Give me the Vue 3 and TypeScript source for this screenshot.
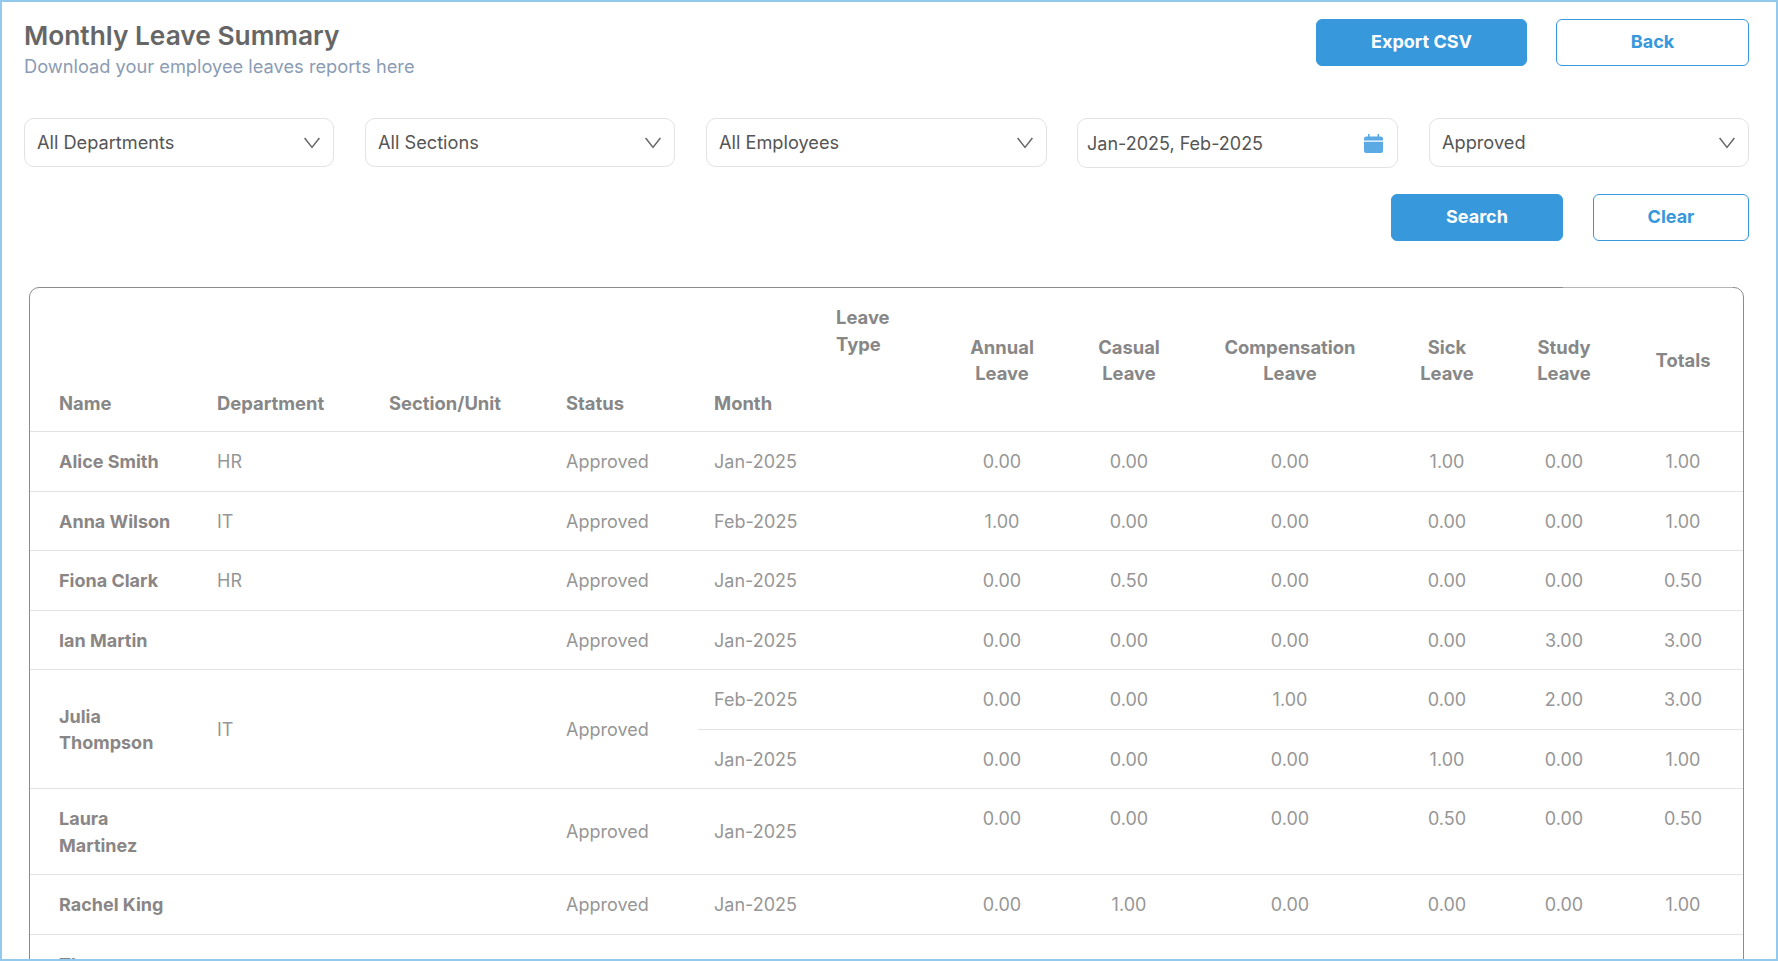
<script setup lang="ts">
interface Group {
  name: string
  dept: string
  status: string
  lines: { month: string; vals: string[] }[]
  top?: boolean
}

const head = ['Annual Leave', 'Casual Leave', 'Compensation Leave', 'Sick Leave', 'Study Leave', 'Totals']

const groups: Group[] = [
  { name: 'Alice Smith', dept: 'HR', status: 'Approved', lines: [{ month: 'Jan-2025', vals: ['0.00', '0.00', '0.00', '1.00', '0.00', '1.00'] }] },
  { name: 'Anna Wilson', dept: 'IT', status: 'Approved', lines: [{ month: 'Feb-2025', vals: ['1.00', '0.00', '0.00', '0.00', '0.00', '1.00'] }] },
  { name: 'Fiona Clark', dept: 'HR', status: 'Approved', lines: [{ month: 'Jan-2025', vals: ['0.00', '0.50', '0.00', '0.00', '0.00', '0.50'] }] },
  { name: 'Ian Martin', dept: '', status: 'Approved', lines: [{ month: 'Jan-2025', vals: ['0.00', '0.00', '0.00', '0.00', '3.00', '3.00'] }] },
  {
    name: 'Julia Thompson', dept: 'IT', status: 'Approved',
    lines: [
      { month: 'Feb-2025', vals: ['0.00', '0.00', '1.00', '0.00', '2.00', '3.00'] },
      { month: 'Jan-2025', vals: ['0.00', '0.00', '0.00', '1.00', '0.00', '1.00'] }
    ]
  },
  { name: 'Laura Martinez', dept: '', status: 'Approved', top: true, lines: [{ month: 'Jan-2025', vals: ['0.00', '0.00', '0.00', '0.50', '0.00', '0.50'] }] },
  { name: 'Rachel King', dept: '', status: 'Approved', lines: [{ month: 'Jan-2025', vals: ['0.00', '1.00', '0.00', '0.00', '0.00', '1.00'] }] },
  { name: 'Thomas Moore', dept: '', status: 'Approved', lines: [{ month: 'Jan-2025', vals: ['0.00', '1.00', '0.00', '0.00', '0.00', '1.00'] }] }
]

const widths = [171, 172, 177, 148, 122, 118, 128, 126, 196, 118, 116, 122]
</script>

<template>
  <div class="page">
    <header class="top">
      <div class="titles">
        <h1>Monthly Leave Summary</h1>
        <p>Download your employee leaves reports here</p>
      </div>
      <div class="actions">
        <button class="btn solid export">Export CSV</button>
        <button class="btn outline back">Back</button>
      </div>
    </header>

    <div class="filters">
      <div class="field f1"><span>All Departments</span>
        <svg class="chev" viewBox="0 0 16 16"><path d="M.6 3 8 12.4 15.4 3" /></svg>
      </div>
      <div class="field f1"><span>All Sections</span>
        <svg class="chev" viewBox="0 0 16 16"><path d="M.6 3 8 12.4 15.4 3" /></svg>
      </div>
      <div class="field f2"><span>All Employees</span>
        <svg class="chev" viewBox="0 0 16 16"><path d="M.6 3 8 12.4 15.4 3" /></svg>
      </div>
      <div class="field date"><span>Jan-2025, Feb-2025</span>
        <svg class="cal" viewBox="0 0 19 19">
          <path d="M4 0h1.5v2.5h8V0H15v2.5h1.8A2.2 2.2 0 0 1 19 4.7V6.6H0V4.7A2.2 2.2 0 0 1 2.2 2.5H4Z" />
          <path d="M0 7.8h19v9A2.2 2.2 0 0 1 16.8 19H2.2A2.2 2.2 0 0 1 0 16.8Z" />
        </svg>
      </div>
      <div class="field f3"><span>Approved</span>
        <svg class="chev" viewBox="0 0 16 16"><path d="M.6 3 8 12.4 15.4 3" /></svg>
      </div>
    </div>

    <div class="search-row">
      <button class="btn solid search">Search</button>
      <button class="btn outline clear">Clear</button>
    </div>

    <div class="table-wrap">
      <div class="table-box">
        <table>
          <colgroup>
            <col v-for="(w, i) in widths" :key="i" :style="{ width: w + 'px' }" />
          </colgroup>
          <thead>
            <tr>
              <th class="bottom first">Name</th>
              <th class="bottom">Department</th>
              <th class="bottom">Section/Unit</th>
              <th class="bottom">Status</th>
              <th class="bottom">Month</th>
              <th class="up">Leave Type</th>
              <th v-for="h in head" :key="h" class="num">{{ h }}</th>
            </tr>
          </thead>
          <tbody>
            <template v-for="g in groups" :key="g.name">
              <tr v-for="(l, i) in g.lines" :key="l.month">
                <template v-if="i === 0">
                  <td class="first name" :rowspan="g.lines.length">{{ g.name }}</td>
                  <td :rowspan="g.lines.length">{{ g.dept }}</td>
                  <td :rowspan="g.lines.length"></td>
                  <td :rowspan="g.lines.length">{{ g.status }}</td>
                </template>
                <td>{{ l.month }}</td>
                <td></td>
                <td v-for="(v, k) in l.vals" :key="k" class="num" :class="{ up: g.top }">{{ v }}</td>
              </tr>
            </template>
          </tbody>
        </table>
      </div>
    </div>
  </div>
</template>

<style>
html, body { margin: 0; padding: 0; background: #fff; }
</style>

<style scoped>
.page {
  box-sizing: border-box;
  height: 961px;
  overflow: hidden;
  border: 2px solid #94c9ee;
  padding: 17px 27px 0 22px;
  font-family: Inter, "Liberation Sans", sans-serif;
  background: #fff;
}
.top { display: flex; justify-content: space-between; align-items: flex-start; }
h1 { margin: 1px 0 0; font-size: 26.3px; line-height: 32px; font-weight: 600; color: #666; }
.titles p { margin: 1px 0 0; font-size: 18.25px; line-height: 27px; color: #8b9bb4; }
.actions { display: flex; gap: 29px; }
.btn {
  box-sizing: border-box;
  height: 47px;
  border-radius: 6px;
  font: 700 18px/1 Inter, "Liberation Sans", sans-serif;
  padding: 0 0 2px;
  cursor: pointer;
}
.solid { background: #3798dc; border: 1px solid #3798dc; color: #fff; }
.outline { background: #fff; border: 1px solid #3798dc; color: #3798dc; }
.export { width: 211px; }
.back { width: 193px; }
.search { width: 172px; }
.clear { width: 156px; }

.filters { display: flex; gap: 31px; margin-top: 38px; align-items: flex-start; }
.field {
  box-sizing: border-box;
  height: 49px;
  border: 1px solid #e2e2e2;
  border-radius: 10px;
  display: flex;
  align-items: center;
  justify-content: space-between;
  padding: 0 13px 0 12px;
  font-size: 18.2px;
  color: #555;
}
.field span { position: relative; top: -1px; }
.f1 { width: 310px; }
.f2 { width: 341px; }
.f3 { width: 320px; }
.date { width: 321px; margin-left: -1px; height: 50px; padding: 0 14px 0 9px; font-size: 18px; }
.date span { top: 0; }
.chev { width: 16px; height: 16px; fill: none; stroke: #666; stroke-width: 1.5; }
.cal { width: 19px; height: 19px; fill: #5baae4; }

.search-row { display: flex; justify-content: flex-end; gap: 30px; margin-top: 26px; }

.table-wrap { position: relative; margin: 46px 5px 0; }
.table-wrap::after {
  content: "";
  position: absolute;
  top: 0;
  left: 1534px;
  width: 170px;
  height: 1px;
  background: #b4b4b4;
}
.table-box {
  border: 1px solid #8c8c8c;
  border-radius: 10px;
  overflow: hidden;
}
table { border-collapse: collapse; table-layout: fixed; width: 1714px; font-size: 18px; line-height: 26.5px; color: #969696; }
th, td { padding: 17px 16px 15px; text-align: left; font-weight: 400; }
th {
  padding: 16px 16px 15px;
  font-size: 18.4px;
  font-weight: 700;
  color: #878787;
  height: 112px;
  border-bottom: 1px solid #e3e0e1;
  box-sizing: content-box;
}
td { border-bottom: 1px solid #e8e2e4; }
.bottom { vertical-align: bottom; }
th.up, td.up { vertical-align: top; }
.num { text-align: center; }
th.first, td.first { padding-left: 29px; }
td.name { font-weight: 650; color: #8a8686; }
</style>
